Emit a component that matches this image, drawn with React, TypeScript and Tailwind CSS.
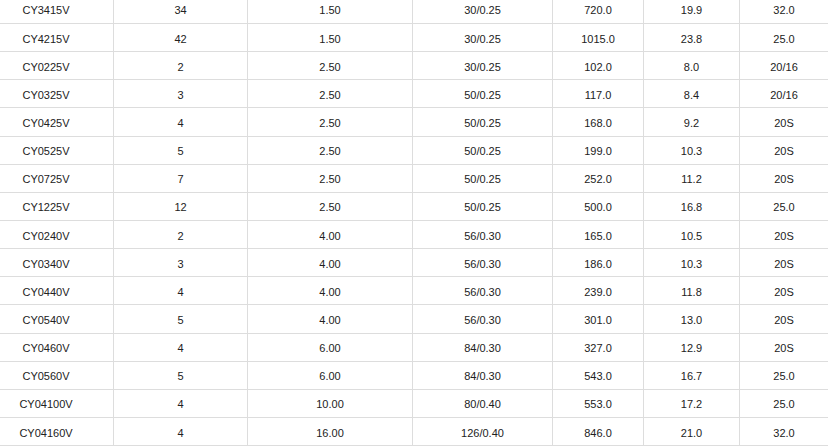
import React from "react";

const rows: string[][] = [
  ["CY3415V", "34", "1.50", "30/0.25", "720.0", "19.9", "32.0"],
  ["CY4215V", "42", "1.50", "30/0.25", "1015.0", "23.8", "25.0"],
  ["CY0225V", "2", "2.50", "30/0.25", "102.0", "8.0", "20/16"],
  ["CY0325V", "3", "2.50", "50/0.25", "117.0", "8.4", "20/16"],
  ["CY0425V", "4", "2.50", "50/0.25", "168.0", "9.2", "20S"],
  ["CY0525V", "5", "2.50", "50/0.25", "199.0", "10.3", "20S"],
  ["CY0725V", "7", "2.50", "50/0.25", "252.0", "11.2", "20S"],
  ["CY1225V", "12", "2.50", "50/0.25", "500.0", "16.8", "25.0"],
  ["CY0240V", "2", "4.00", "56/0.30", "165.0", "10.5", "20S"],
  ["CY0340V", "3", "4.00", "56/0.30", "186.0", "10.3", "20S"],
  ["CY0440V", "4", "4.00", "56/0.30", "239.0", "11.8", "20S"],
  ["CY0540V", "5", "4.00", "56/0.30", "301.0", "13.0", "20S"],
  ["CY0460V", "4", "6.00", "84/0.30", "327.0", "12.9", "20S"],
  ["CY0560V", "5", "6.00", "84/0.30", "543.0", "16.7", "25.0"],
  ["CY04100V", "4", "10.00", "80/0.40", "553.0", "17.2", "25.0"],
  ["CY04160V", "4", "16.00", "126/0.40", "846.0", "21.0", "32.0"],
];

export default function App() {
  return (
    <div
      className="w-[828px] h-[448px] overflow-hidden bg-white text-[11px] text-[#222222]"
      style={{ fontFamily: '"Liberation Sans", Arial, sans-serif' }}
    >
      <div className="-mt-[4.15px]">
        {rows.map((r, i) => (
          <div
            key={i}
            className="grid grid-cols-[113px_134px_165px_140px_91px_96px_1fr] h-[28.15px] border-b border-[#dddddd]"
          >
            {r.map((c, j) => (
              <div
                key={j}
                className={
                  "flex items-center justify-center pt-[3px] leading-none " +
                  (j === 0 ? "pr-[21px]" : "border-l border-[#dddddd]")
                }
              >
                {c}
              </div>
            ))}
          </div>
        ))}
      </div>
    </div>
  );
}
